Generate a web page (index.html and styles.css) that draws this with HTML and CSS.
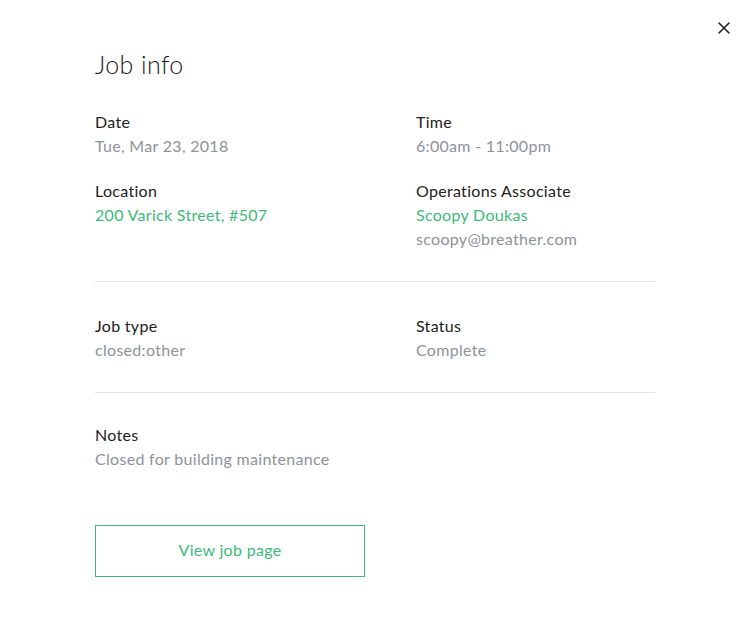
FILE: index.html
```html
<!DOCTYPE html>
<html>
<head>
<meta charset="utf-8">
<link rel="stylesheet" href="styles.css">
</head>
<body>
<div class="modal">
  <button class="close" aria-label="Close">
    <svg width="12" height="12" viewBox="0 0 12 12"><path d="M1 1L11 11M11 1L1 11" stroke="#222" stroke-width="1.6" stroke-linecap="round"/></svg>
  </button>
  <h1 class="title">Job info</h1>
  <div class="grid first">
    <div class="field">
      <div class="label">Date</div>
      <div class="value">Tue, Mar 23, 2018</div>
    </div>
    <div class="field">
      <div class="label">Time</div>
      <div class="value">6:00am - 11:00pm</div>
    </div>
    <div class="field">
      <div class="label">Location</div>
      <div class="value green">200 Varick Street, #507</div>
    </div>
    <div class="field">
      <div class="label">Operations Associate</div>
      <div class="value green">Scoopy Doukas</div>
      <div class="value">scoopy@breather.com</div>
    </div>
  </div>
  <hr class="divider">
  <div class="grid">
    <div class="field">
      <div class="label">Job type</div>
      <div class="value">closed:other</div>
    </div>
    <div class="field">
      <div class="label">Status</div>
      <div class="value">Complete</div>
    </div>
  </div>
  <hr class="divider tight">
  <div class="field">
    <div class="label">Notes</div>
    <div class="value">Closed for building maintenance</div>
  </div>
  <button class="btn">View job page</button>
</div>
</body>
</html>
```

FILE: styles.css
```css
html, body {
  margin: 0;
  padding: 0;
  background: #fff;
}
body {
  font-family: Lato, "Noto Sans", sans-serif;
  color: #222;
}
.modal {
  position: relative;
  width: 752px;
  height: 630px;
  box-sizing: border-box;
  padding: 48px 97px 0 95px;
}
.close {
  position: absolute;
  top: 22px;
  right: 22px;
  width: 12px;
  height: 12px;
  padding: 0;
  border: 0;
  background: none;
  display: flex;
}
.title {
  margin: 0 0 30px;
  font-size: 25px;
  font-weight: 300;
  line-height: 32px;
  color: #1a1a1a;
  letter-spacing: 0.4px;
}
.grid {
  display: grid;
  grid-template-columns: 321px 1fr;
  row-gap: 21px;
}
.label {
  font-size: 16px;
  line-height: 24px;
  color: #222;
  letter-spacing: 0.3px;
}
.value {
  font-size: 16px;
  line-height: 24px;
  color: #8e929c;
  letter-spacing: 0.3px;
}
.value.green {
  color: #40b97a;
}
.divider {
  border: 0;
  border-top: 1px solid #e2e2e2;
  margin: 30px 0 32px;
}
.divider.tight {
  margin-bottom: 30px;
}
.btn {
  margin-top: 54px;
  width: 270px;
  height: 52px;
  border: 1px solid #40b97a;
  background: #fff;
  color: #40b97a;
  font-family: Lato, "Noto Sans", sans-serif;
  font-size: 16px;
  letter-spacing: 0.3px;
  line-height: 24px;
  display: flex;
  align-items: center;
  justify-content: center;
  padding: 0 0 3px;
}
```
